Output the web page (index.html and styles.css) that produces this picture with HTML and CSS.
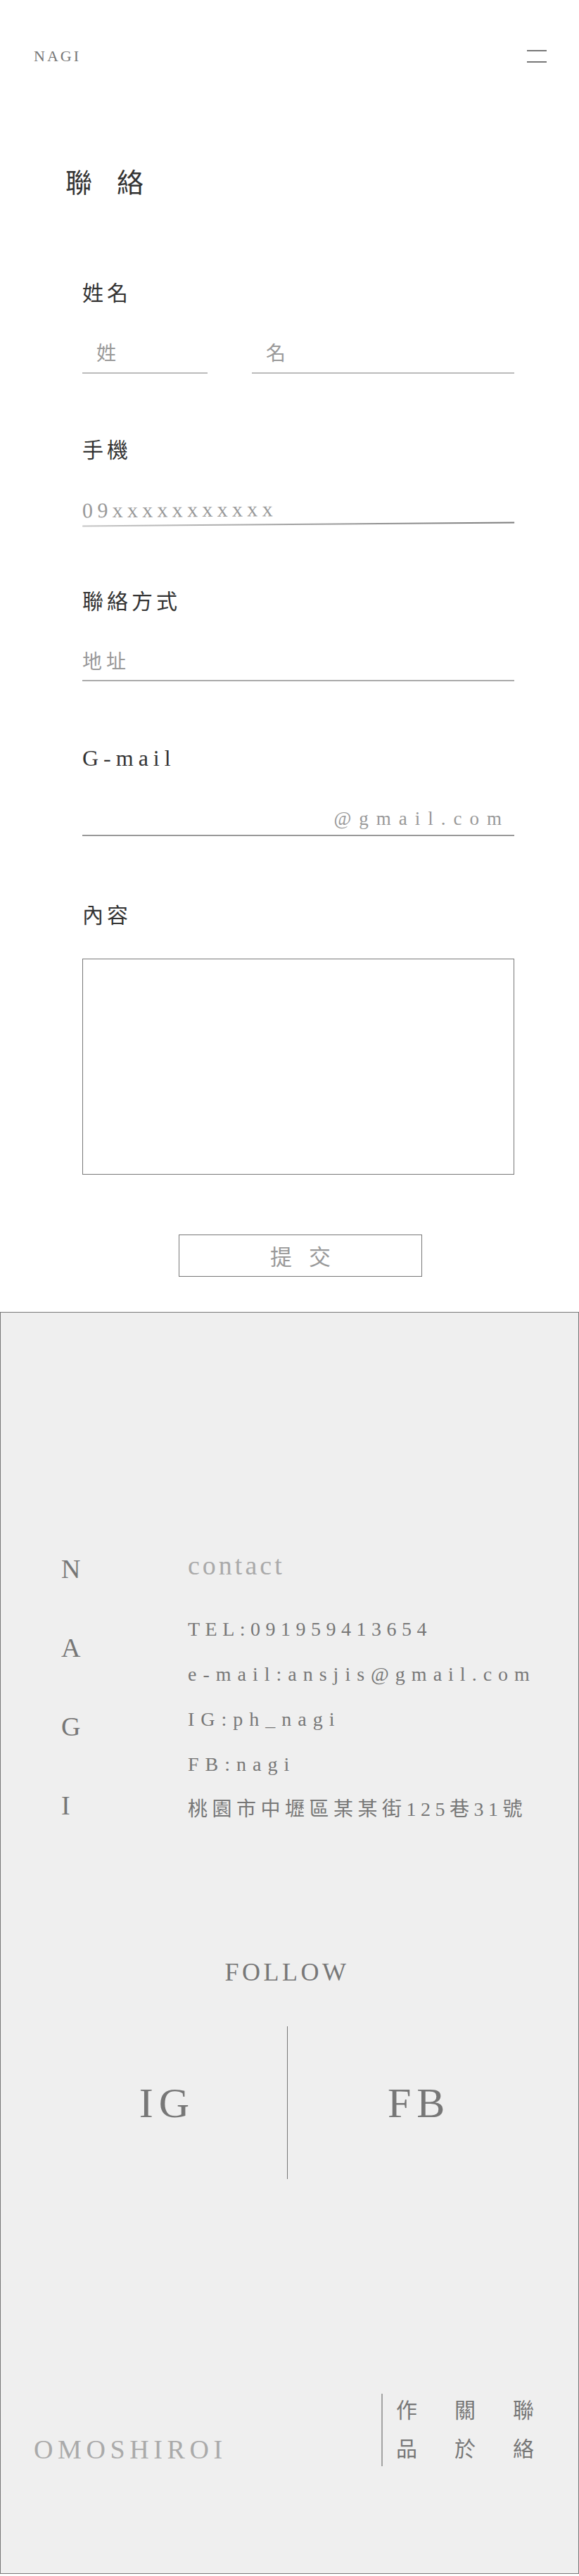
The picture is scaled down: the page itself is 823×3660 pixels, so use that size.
FILE: index.html
```html
<!DOCTYPE html>
<html lang="zh-Hant">
<head>
<meta charset="utf-8">
<title>聯絡 - NAGI</title>
<link rel="stylesheet" href="styles.css">
</head>
<body>
<header class="site-header">
  <a class="brand" href="#">NAGI</a>
  <button class="menu-btn" type="button" aria-label="選單"><span></span><span></span></button>
</header>

<main class="contact">
  <h1 class="page-title">聯絡</h1>
  <form class="form">
    <div class="field field-first">
      <label class="label">姓名</label>
      <div class="name-row">
        <input class="input input-cjk input-name" type="text" placeholder="姓">
        <input class="input input-cjk input-name" type="text" placeholder="名">
      </div>
    </div>
    <div class="field">
      <label class="label">手機</label>
      <input class="input input-phone" type="tel" placeholder="09xxxxxxxxxxx">
    </div>
    <div class="field">
      <label class="label">聯絡方式</label>
      <input class="input input-cjk input-address" type="text" placeholder="地址">
    </div>
    <div class="field field-mail">
      <label class="label label-latin">G-mail</label>
      <div class="mail-row">
        <input class="input input-mail" type="text">
        <span class="mail-suffix">@gmail.com</span>
      </div>
    </div>
    <div class="field field-content">
      <label class="label">內容</label>
      <textarea class="textarea"></textarea>
    </div>
    <button class="submit" type="submit">提交</button>
  </form>
</main>

<footer class="site-footer">
  <div class="info">
    <div class="brand-col">
      <span>N</span><span>A</span><span>G</span><span>I</span>
    </div>
    <div class="info-col">
      <p class="info-title">contact</p>
      <ul class="info-list">
        <li class="tel">TEL:091959413654</li>
        <li>e-mail:ansjis@gmail.com</li>
        <li>IG:ph_nagi</li>
        <li>FB:nagi</li>
        <li class="addr">桃園市中壢區某某街125巷31號</li>
      </ul>
    </div>
  </div>

  <p class="follow">FOLLOW</p>
  <div class="social">
    <a class="social-link social-ig" href="#">IG</a>
    <span class="social-divider"></span>
    <a class="social-link social-fb" href="#">FB</a>
  </div>

  <div class="bottom-bar">
    <p class="wordmark">OMOSHIROI</p>
    <nav class="foot-nav">
      <span class="foot-divider"></span>
      <a class="foot-link" href="#">作品</a>
      <a class="foot-link" href="#">關於</a>
      <a class="foot-link" href="#">聯絡</a>
    </nav>
  </div>
</footer>
</body>
</html>
```

FILE: styles.css
```css
* {
  box-sizing: border-box;
}

body {
  margin: 0;
  background: #fff;
  font-family: "Liberation Serif", "Noto Sans CJK TC", serif;
  color: #333;
}

/* ---------- header ---------- */
.site-header {
  height: 159px;
  display: flex;
  align-items: center;
  justify-content: space-between;
  padding: 0 46px 0 48px;
}

.brand {
  font-family: "Liberation Serif", serif;
  font-size: 22px;
  line-height: 1;
  letter-spacing: 3px;
  color: #777;
  text-decoration: none;
}

.menu-btn {
  width: 28px;
  height: 18px;
  padding: 0;
  border: 0;
  background: none;
  display: flex;
  flex-direction: column;
  justify-content: space-between;
}

.menu-btn span {
  display: block;
  width: 100%;
  height: 2px;
  background: #777;
}

/* ---------- contact form ---------- */
.page-title {
  margin: 73px 0 0 93px;
  font-family: "Noto Sans CJK TC", sans-serif;
  font-weight: 400;
  font-size: 38px;
  line-height: 50px;
  letter-spacing: 35px;
  color: #333;
}

.form {
  margin-left: 117px;
  width: 614px;
}

.field {
  margin-top: 86px;
}

.field-first {
  margin-top: 112px;
}

.field-mail {
  margin-top: 89px;
}

.field-content {
  margin-top: 90px;
}

.label {
  display: block;
  font-family: "Noto Sans CJK TC", sans-serif;
  font-size: 30px;
  line-height: 40px;
  letter-spacing: 5px;
  color: #333;
}

.label-latin {
  font-family: "Liberation Serif", serif;
  font-size: 32px;
  letter-spacing: 7px;
}

.input {
  display: block;
  width: 100%;
  margin: 46px 0 0;
  padding: 0;
  border: 0;
  border-radius: 0;
  outline: none;
  background: transparent;
  font-size: 28px;
  color: #999;
  -webkit-appearance: none;
  appearance: none;
}

.input::placeholder {
  color: #999;
  opacity: 1;
}

.input-cjk {
  font-family: "Noto Sans CJK TC", sans-serif;
  letter-spacing: 6px;
}

.name-row {
  display: grid;
  grid-template-columns: 178px 1fr;
  column-gap: 63px;
  margin-top: 46px;
}

.input-name {
  margin: 0;
  height: 51px;
  padding: 0 0 9px 20px;
  border-bottom: 2px solid #bbb;
}

.input-phone {
  height: 43px;
  padding: 0 0 1px;
  font-family: "Liberation Serif", serif;
  font-size: 30px;
  letter-spacing: 6.3px;
  border-bottom: 2px solid;
  border-image: linear-gradient(90deg, #c6c6c6, #7a7a7a) 1;
  transform: rotate(-0.45deg);
}

.input-address {
  height: 50px;
  padding: 0 0 8px;
  border-bottom: 2px solid #aaa;
}

.mail-row {
  display: flex;
  align-items: flex-start;
  margin-top: 46px;
  height: 45px;
  padding: 0 7px 3px 0;
  border-bottom: 2px solid #999;
}

.input-mail {
  flex: 1;
  margin: 0;
  height: 40px;
  font-family: "Liberation Serif", serif;
}

.mail-suffix {
  font-family: "Liberation Serif", serif;
  font-size: 27px;
  line-height: 40px;
  letter-spacing: 11px;
  color: #999;
}

.textarea {
  display: block;
  width: 614px;
  height: 307px;
  margin-top: 44px;
  padding: 0;
  border: 1px solid #777;
  border-radius: 0;
  resize: none;
  outline: none;
  background: #fff;
}

.submit {
  display: block;
  width: 346px;
  height: 60px;
  margin: 85px 0 0 137px;
  padding: 0 0 0 24px;
  border: 1px solid #777;
  border-radius: 0;
  background: #fff;
  font-family: "Noto Sans CJK TC", sans-serif;
  font-size: 31px;
  line-height: 58px;
  letter-spacing: 24px;
  color: #999;
}

/* ---------- footer ---------- */
.site-footer {
  margin-top: 50px;
  padding: 308px 0 137px;
  background: #efefef;
  border: 1px solid #777;
  color: #777;
}

.info {
  display: grid;
  grid-template-columns: 180px 1fr;
  padding-left: 86px;
}

.brand-col span {
  display: block;
  font-size: 38px;
  line-height: 112px;
}

.info-col {
  padding-top: 27px;
}

.info-title {
  margin: 0;
  font-size: 38px;
  line-height: 48px;
  letter-spacing: 4px;
  color: #aaa;
}

.info-list {
  list-style: none;
  margin: 34.5px 0 0;
  padding: 0;
}

.info-list li {
  font-size: 28px;
  line-height: 64px;
  letter-spacing: 9px;
  white-space: nowrap;
}

.info-list .tel {
  letter-spacing: 7.5px;
}

.info-list .addr {
  letter-spacing: 6.5px;
}

.follow {
  margin: 157px 0 0;
  padding-right: 7px;
  text-align: center;
  font-size: 36px;
  line-height: 48px;
  letter-spacing: 4.5px;
}

.social {
  display: grid;
  grid-template-columns: 1fr 1px 1fr;
  align-items: center;
  margin-top: 53px;
  padding-right: 6px;
}

.social-divider {
  height: 217px;
  background: #777;
}

.social-link {
  font-size: 60px;
  line-height: 1;
  letter-spacing: 8px;
  color: #777;
  text-decoration: none;
}

.social-ig {
  justify-self: end;
  margin-right: 131px;
}

.social-fb {
  justify-self: start;
  margin-left: 142px;
}

.bottom-bar {
  display: flex;
  align-items: flex-start;
  justify-content: space-between;
  margin-top: 305px;
  padding: 0 63px 0 47px;
}

.wordmark {
  margin: 53px 0 0;
  font-size: 38px;
  line-height: 52px;
  letter-spacing: 6.6px;
  color: #aaa;
}

.foot-nav {
  display: flex;
  align-items: flex-start;
}

.foot-divider {
  width: 2px;
  height: 103px;
  background: #a3a3a3;
  margin-right: 19px;
}

.foot-link {
  writing-mode: vertical-rl;
  margin-top: 8px;
  font-family: "Noto Sans CJK TC", sans-serif;
  font-size: 30px;
  line-height: 30px;
  letter-spacing: 25px;
  color: #777;
  text-decoration: none;
}

.foot-link + .foot-link {
  margin-left: 53px;
}
```
